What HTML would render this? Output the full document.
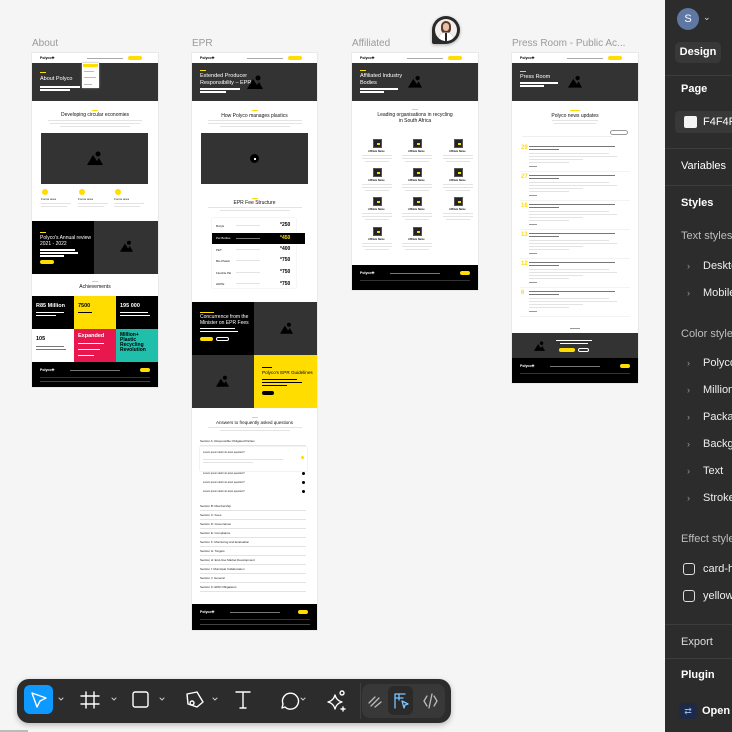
<!DOCTYPE html><html><head><meta charset="utf-8"><style>
*{margin:0;padding:0;box-sizing:border-box}
body{width:732px;height:732px;overflow:hidden;background:#f5f5f5;font-family:"Liberation Sans",sans-serif;position:relative}
.a{position:absolute}
.lbl{position:absolute;font-size:10px;color:#9a9a9a}
.fr{position:absolute;background:#fff;overflow:hidden;box-shadow:0 0 0 .5px #ddd}
.nav{position:absolute;left:0;top:0;width:100%;height:10px;background:#fff}
.logo{position:absolute;left:8px;top:3px;font-size:3.5px;font-weight:bold;color:#000}
.pill{position:absolute;border-radius:3px;background:#ffdd00}
.hero{position:absolute;left:0;top:10px;width:100%;height:38px;background:#333}
.wt{position:absolute;color:#fff;font-size:5.5px;line-height:6.5px;white-space:nowrap}
.bt{position:absolute;color:#111;font-size:5px;line-height:6px;text-align:center;width:100%}
.g{position:absolute;height:1px;background:#e3e3e3}
.w{position:absolute;height:1.6px;background:#fff}
.y{position:absolute;height:1px;width:6px;background:#ffdd00}
.dk{position:absolute;background:#333}
.bk{position:absolute;background:#000}
.ft{position:absolute;left:0;width:100%;background:#000}
.s{position:absolute;font-size:3px;color:#222;white-space:nowrap}
.rp{position:absolute;left:665px;top:0;width:67px;height:732px;background:#2c2c2c;color:#fff;font-size:11px}
.rp div{position:absolute;white-space:nowrap}
.hd{left:16px;font-weight:bold}
.sub{left:16px;color:#bdbdbd}
.it{left:38px;color:#eee}
.ch{left:22px;color:#999;font-size:9px}
.dv{left:0;width:67px;height:1px;background:#3d3d3d}
</style></head><body>

<div class="lbl" style="left:32px;top:38px">About</div>
<div class="lbl" style="left:192px;top:38px">EPR</div>
<div class="lbl" style="left:352px;top:38px">Affiliated</div>
<div class="lbl" style="left:512px;top:38px">Press Room - Public Ac...</div>

<!-- ABOUT -->
<div class="fr" style="left:32px;top:53px;width:126px;height:334px">
 <div class="nav"><div class="logo">Polyco✚</div><div class="g" style="left:55px;top:4.5px;width:36px;background:#aaa"></div><div class="pill" style="left:96px;top:3px;width:14px;height:4px"></div></div>
 <div class="hero"><div class="y" style="left:8px;top:9px"></div><div class="wt" style="left:8px;top:13px">About Polyco</div><div class="w" style="left:8px;top:23px;width:40px"></div><div class="w" style="left:8px;top:26px;width:30px"></div></div>
 <div class="a" style="left:50px;top:10px;width:17px;height:25px;background:#fff;box-shadow:0 0 2px #999"><div class="a" style="left:1px;top:1px;width:15px;height:3px;background:#ffdd00"></div><div class="g" style="left:2px;top:8px;width:10px;background:#bbb"></div><div class="g" style="left:2px;top:14px;width:12px;background:#bbb"></div><div class="g" style="left:2px;top:21px;width:8px;background:#bbb"></div></div>
 <div class="y" style="left:60px;top:57px"></div>
 <div class="bt" style="top:59px">Developing circular economies</div>
 <div class="g" style="left:16px;top:67px;width:94px"></div><div class="g" style="left:18px;top:70px;width:90px"></div><div class="g" style="left:28px;top:73px;width:70px"></div>
 <div class="dk" style="left:9px;top:80px;width:107px;height:51px"><svg class="a" style="left:46px;top:18px" width="16" height="14" viewBox="0 0 16 14"><path d="M0 14L6 4L10 10L12 7L16 14Z" fill="#000"/><circle cx="11" cy="3" r="2.5" fill="#000"/></svg></div>
 <div class="a" style="left:10px;top:136px;width:6px;height:6px;border-radius:3px;background:#ffdd00"></div>
 <div class="a" style="left:47px;top:136px;width:6px;height:6px;border-radius:3px;background:#ffdd00"></div>
 <div class="a" style="left:83px;top:136px;width:6px;height:6px;border-radius:3px;background:#ffdd00"></div>
 <div class="s" style="left:9px;top:144px">Focus area</div><div class="s" style="left:46px;top:144px">Focus area</div><div class="s" style="left:82px;top:144px">Focus area</div>
 <div class="g" style="left:9px;top:150px;width:30px"></div><div class="g" style="left:46px;top:150px;width:30px"></div><div class="g" style="left:82px;top:150px;width:30px"></div>
 <div class="g" style="left:9px;top:153px;width:26px"></div><div class="g" style="left:46px;top:153px;width:26px"></div><div class="g" style="left:82px;top:153px;width:26px"></div>
 <div class="bk" style="left:0;top:168px;width:62px;height:53px"><div class="y" style="left:8px;top:11px"></div><div class="wt" style="left:8px;top:14px;font-size:5px;line-height:6px">Polyco's Annual review<br>2021 - 2022</div><div class="w" style="left:8px;top:28px;width:35px"></div><div class="w" style="left:8px;top:31px;width:38px"></div><div class="w" style="left:8px;top:34px;width:24px"></div><div class="pill" style="left:8px;top:39px;width:14px;height:4px"></div></div>
 <div class="dk" style="left:62px;top:168px;width:64px;height:53px"><svg class="a" style="left:26px;top:19px" width="13" height="12" viewBox="0 0 16 14"><path d="M0 14L6 4L10 10L12 7L16 14Z" fill="#000"/><circle cx="11" cy="3" r="2.5" fill="#000"/></svg></div>
 <div class="y" style="left:60px;top:228px"></div>
 <div class="bt" style="top:231px">Achievements</div>
 <div class="bk" style="left:0;top:243px;width:42px;height:33px"><div class="wt" style="left:4px;top:7px;font-weight:bold;font-size:5.5px">R85 Million</div><div class="w" style="left:4px;top:16px;width:28px;height:1px"></div><div class="w" style="left:4px;top:19px;width:20px;height:1px"></div></div>
 <div class="a" style="left:42px;top:243px;width:42px;height:33px;background:#ffdd00"><div class="wt" style="left:4px;top:7px;font-weight:bold;color:#000">7500</div><div class="g" style="left:4px;top:16px;width:14px;background:#000"></div></div>
 <div class="bk" style="left:84px;top:243px;width:42px;height:33px"><div class="wt" style="left:4px;top:7px;font-weight:bold">195 000</div><div class="w" style="left:4px;top:16px;width:28px;height:1px"></div><div class="w" style="left:4px;top:19px;width:30px;height:1px"></div></div>
 <div class="a" style="left:0;top:276px;width:42px;height:33px;background:#fff"><div class="wt" style="left:4px;top:7px;font-weight:bold;color:#000">105</div><div class="g" style="left:4px;top:17px;width:28px;background:#777"></div><div class="g" style="left:4px;top:20px;width:30px;background:#777"></div></div>
 <div class="a" style="left:42px;top:276px;width:42px;height:33px;background:#e8184f"><div class="wt" style="left:4px;top:4px;font-weight:bold">Expanded</div><div class="w" style="left:4px;top:14px;width:26px;height:1px"></div><div class="w" style="left:4px;top:20px;width:22px;height:1px"></div><div class="w" style="left:4px;top:26px;width:16px;height:1px"></div></div>
 <div class="a" style="left:84px;top:276px;width:42px;height:33px;background:#1fbfab"><div class="wt" style="left:4px;top:4px;font-weight:bold;color:#000;font-size:5px;line-height:5px">Million+<br>Plastic<br>Recycling<br>Revolution</div></div>
 <div class="ft" style="top:309px;height:25px"><div class="logo" style="color:#fff;top:6px">Polyco✚</div><div class="g" style="left:38px;top:8px;width:50px;background:#777"></div><div class="pill" style="left:108px;top:6px;width:10px;height:4px"></div><div class="g" style="left:8px;top:15px;width:110px;background:#333"></div><div class="g" style="left:8px;top:19px;width:110px;background:#444;height:.5px"></div></div>
</div>

<!-- EPR -->
<div class="fr" style="left:192px;top:53px;width:125px;height:577px">
 <div class="nav"><div class="logo">Polyco✚</div><div class="g" style="left:55px;top:4.5px;width:36px;background:#aaa"></div><div class="pill" style="left:96px;top:3px;width:14px;height:4px"></div></div>
 <div class="hero"><div class="y" style="left:8px;top:7px"></div><div class="wt" style="left:8px;top:10px">Extended Producer<br>Responsibility – EPR</div><div class="w" style="left:8px;top:25px;width:40px"></div><div class="w" style="left:8px;top:28px;width:26px"></div><svg class="a" style="left:55px;top:12px" width="16" height="14" viewBox="0 0 16 14"><path d="M0 14L6 4L10 10L12 7L16 14Z" fill="#000"/><circle cx="11" cy="3" r="2.5" fill="#000"/></svg></div>
 <div class="y" style="left:60px;top:57px"></div>
 <div class="bt" style="top:60px">How Polyco manages plastics</div>
 <div class="g" style="left:16px;top:67px;width:94px"></div><div class="g" style="left:16px;top:70px;width:94px"></div><div class="g" style="left:28px;top:73px;width:70px"></div>
 <div class="dk" style="left:9px;top:80px;width:107px;height:51px"><div class="a" style="left:49px;top:21px;width:9px;height:9px;border-radius:5px;background:#000"></div><div class="a" style="left:52.5px;top:24.5px;width:2px;height:2px;background:#fff"></div></div>
 <div class="y" style="left:60px;top:145px"></div>
 <div class="bt" style="top:147px">EPR Fee Structure</div>
 <div class="g" style="left:16px;top:154px;width:94px"></div><div class="g" style="left:28px;top:157px;width:70px"></div>
 <div class="a" style="left:20px;top:165px;width:84px;height:70px;box-shadow:0 0 1px #ccc"></div>
 <div class="s" style="left:24px;top:171px">Butyls</div><div class="g" style="left:44px;top:172px;width:24px"></div><div class="a" style="left:88px;top:169px;font-size:5px;font-weight:bold">*250</div>
 <div class="bk" style="left:20px;top:180px;width:93px;height:11px"><div class="s" style="left:4px;top:3px;color:#fff">Pet Bottles</div><div class="g" style="left:24px;top:5px;width:24px;background:#777"></div><div class="a" style="left:68px;top:2px;font-size:5px;font-weight:bold;color:#ffdd00">*450</div></div>
 <div class="s" style="left:24px;top:195px">PET</div><div class="g" style="left:44px;top:196px;width:24px"></div><div class="a" style="left:88px;top:193px;font-size:5px;font-weight:bold">*400</div>
 <div class="s" style="left:24px;top:206px">Bio-Plastic</div><div class="g" style="left:44px;top:207px;width:24px"></div><div class="a" style="left:88px;top:204px;font-size:5px;font-weight:bold">*750</div>
 <div class="s" style="left:24px;top:218px">Flexible PE</div><div class="g" style="left:44px;top:219px;width:24px"></div><div class="a" style="left:88px;top:216px;font-size:5px;font-weight:bold">*750</div>
 <div class="s" style="left:24px;top:229px">HDPE</div><div class="g" style="left:44px;top:230px;width:24px"></div><div class="a" style="left:88px;top:228px;font-size:5px;font-weight:bold">*750</div>
 <div class="bk" style="left:0;top:249px;width:62px;height:53px"><div class="y" style="left:8px;top:10px;width:14px"></div><div class="wt" style="left:8px;top:13px;font-size:5px;line-height:5.5px">Concurrence from the<br>Minister on EPR Fees</div><div class="w" style="left:8px;top:26px;width:35px;height:1px"></div><div class="w" style="left:8px;top:29px;width:38px;height:1px"></div><div class="pill" style="left:8px;top:35px;width:13px;height:4px"></div><div class="a" style="left:24px;top:35px;width:13px;height:4px;border:.6px solid #fff;border-radius:3px"></div></div>
 <div class="dk" style="left:62px;top:249px;width:63px;height:53px"><svg class="a" style="left:26px;top:20px" width="13" height="12" viewBox="0 0 16 14"><path d="M0 14L6 4L10 10L12 7L16 14Z" fill="#000"/><circle cx="11" cy="3" r="2.5" fill="#000"/></svg></div>
 <div class="dk" style="left:0;top:302px;width:62px;height:53px"><svg class="a" style="left:24px;top:20px" width="13" height="12" viewBox="0 0 16 14"><path d="M0 14L6 4L10 10L12 7L16 14Z" fill="#000"/><circle cx="11" cy="3" r="2.5" fill="#000"/></svg></div>
 <div class="a" style="left:62px;top:302px;width:63px;height:53px;background:#ffdd00"><div class="g" style="left:8px;top:12px;width:10px;background:#000"></div><div class="wt" style="left:8px;top:15px;color:#000;font-size:4.6px">Polyco's EPR Guidelines</div><div class="g" style="left:8px;top:24px;width:35px;background:#000"></div><div class="g" style="left:8px;top:27px;width:40px;background:#000"></div><div class="g" style="left:8px;top:30px;width:25px;background:#000"></div><div class="a" style="left:8px;top:36px;width:12px;height:4px;border-radius:3px;background:#000"></div></div>
 <div class="y" style="left:60px;top:364px"></div>
 <div class="bt" style="top:367px;font-size:4.5px">Answers to frequently asked questions</div>
 <div class="g" style="left:16px;top:374px;width:94px"></div><div class="g" style="left:28px;top:377px;width:70px"></div>
 <div class="s" style="left:8px;top:386px">Section A: Responsible Obligated Parties</div><div class="g" style="left:8px;top:392px;width:106px;background:#e6e6e6"></div>
 <div class="a" style="left:8px;top:394px;width:107px;height:24px;box-shadow:0 0 1px #bbb"><div class="s" style="left:3px;top:4px;font-size:2.5px">Lorem ipsum dolor sit amet question?</div><div class="g" style="left:3px;top:12px;width:80px"></div><div class="g" style="left:3px;top:15px;width:50px"></div><div class="a" style="left:101px;top:9px;width:3px;height:3px;border-radius:2px;background:#ffdd00"></div></div>
 <div class="s" style="left:11px;top:419px;font-size:2.5px">Lorem ipsum dolor sit amet question?</div><div class="a" style="left:110px;top:419px;width:3px;height:3px;border-radius:2px;background:#000"></div>
 <div class="s" style="left:11px;top:428px;font-size:2.5px">Lorem ipsum dolor sit amet question?</div><div class="a" style="left:110px;top:428px;width:3px;height:3px;border-radius:2px;background:#000"></div>
 <div class="s" style="left:11px;top:437px;font-size:2.5px">Lorem ipsum dolor sit amet question?</div><div class="a" style="left:110px;top:437px;width:3px;height:3px;border-radius:2px;background:#000"></div>
 <div class="s" style="left:8px;top:451px">Section B: Membership</div><div class="g" style="left:8px;top:457px;width:106px"></div>
 <div class="s" style="left:8px;top:460px">Section C: Fees</div><div class="g" style="left:8px;top:466px;width:106px"></div>
 <div class="s" style="left:8px;top:469px">Section D: Governance</div><div class="g" style="left:8px;top:475px;width:106px"></div>
 <div class="s" style="left:8px;top:478px">Section E: Compliance</div><div class="g" style="left:8px;top:484px;width:106px"></div>
 <div class="s" style="left:8px;top:487px">Section F: Monitoring And Evaluation</div><div class="g" style="left:8px;top:493px;width:106px"></div>
 <div class="s" style="left:8px;top:496px">Section G: Targets</div><div class="g" style="left:8px;top:502px;width:106px"></div>
 <div class="s" style="left:8px;top:505px">Section H: End-Use Market Development</div><div class="g" style="left:8px;top:511px;width:106px"></div>
 <div class="s" style="left:8px;top:514px">Section I: Municipal Collaboration</div><div class="g" style="left:8px;top:520px;width:106px"></div>
 <div class="s" style="left:8px;top:523px">Section J: General</div><div class="g" style="left:8px;top:529px;width:106px"></div>
 <div class="s" style="left:8px;top:532px">Section K: EPR Obligations</div><div class="g" style="left:8px;top:538px;width:106px"></div>
 <div class="ft" style="top:551px;height:26px"><div class="logo" style="color:#fff;top:6px">Polyco✚</div><div class="g" style="left:38px;top:8px;width:50px;background:#777"></div><div class="pill" style="left:106px;top:6px;width:10px;height:4px"></div><div class="g" style="left:8px;top:15px;width:110px;background:#333"></div><div class="g" style="left:8px;top:20px;width:110px;background:#444;height:.5px"></div></div>
</div>

<!-- AFFILIATED -->
<div class="fr" style="left:352px;top:53px;width:126px;height:237px">
 <div class="nav"><div class="logo">Polyco✚</div><div class="g" style="left:55px;top:4.5px;width:36px;background:#aaa"></div><div class="pill" style="left:96px;top:3px;width:14px;height:4px"></div></div>
 <div class="hero"><div class="y" style="left:8px;top:7px"></div><div class="wt" style="left:8px;top:10px">Affiliated Industry<br>Bodies</div><div class="w" style="left:8px;top:25px;width:38px"></div><div class="w" style="left:8px;top:28px;width:24px"></div><svg class="a" style="left:56px;top:12px" width="14" height="13" viewBox="0 0 16 14"><path d="M0 14L6 4L10 10L12 7L16 14Z" fill="#000"/><circle cx="11" cy="3" r="2.5" fill="#000"/></svg></div>
 <div class="y" style="left:60px;top:56px"></div>
 <div class="bt" style="top:59px">Leading organisations in recycling<br>in South Africa</div>
 <div id="aff"></div>
 <div class="ft" style="top:212px;height:25px"><div class="logo" style="color:#fff;top:6px">Polyco✚</div><div class="g" style="left:38px;top:8px;width:50px;background:#777"></div><div class="pill" style="left:108px;top:6px;width:10px;height:4px"></div><div class="g" style="left:8px;top:15px;width:110px;background:#333"></div></div>
</div>

<!-- PRESS -->
<div class="fr" style="left:512px;top:53px;width:126px;height:330px">
 <div class="nav"><div class="logo">Polyco✚</div><div class="g" style="left:55px;top:4.5px;width:36px;background:#aaa"></div><div class="pill" style="left:96px;top:3px;width:14px;height:4px"></div></div>
 <div class="hero"><div class="y" style="left:8px;top:8px"></div><div class="wt" style="left:8px;top:11px">Press Room</div><div class="w" style="left:8px;top:19px;width:38px"></div><div class="w" style="left:8px;top:22px;width:24px"></div><svg class="a" style="left:56px;top:12px" width="14" height="13" viewBox="0 0 16 14"><path d="M0 14L6 4L10 10L12 7L16 14Z" fill="#000"/><circle cx="11" cy="3" r="2.5" fill="#000"/></svg></div>
 <div class="y" style="left:58px;top:57px;width:10px"></div>
 <div class="bt" style="top:60px">Polyco news updates</div>
 <div class="g" style="left:40px;top:67px;width:46px"></div><div class="g" style="left:42px;top:70px;width:42px"></div>
 <div class="g" style="left:10px;top:83px;width:90px;background:#eee"></div>
 <div class="a" style="left:98px;top:77px;width:18px;height:5px;border:.5px solid #999;border-radius:3px"></div>
 <div id="press"></div>
 <div class="g" style="left:58px;top:275px;width:10px;background:#999"></div>
 <div class="dk" style="left:0;top:280px;width:126px;height:25px"><svg class="a" style="left:22px;top:8px" width="11" height="10" viewBox="0 0 16 14"><path d="M0 14L6 4L10 10L12 7L16 14Z" fill="#000"/><circle cx="11" cy="3" r="2.5" fill="#000"/></svg><div class="w" style="left:44px;top:7px;width:36px;height:1px"></div><div class="w" style="left:48px;top:10px;width:28px;height:1px"></div><div class="pill" style="left:47px;top:15px;width:16px;height:4px"></div><div class="a" style="left:66px;top:15px;width:11px;height:4px;border:.5px solid #fff;border-radius:3px"></div></div>
 <div class="ft" style="top:305px;height:25px"><div class="logo" style="color:#fff;top:6px">Polyco✚</div><div class="g" style="left:38px;top:8px;width:50px;background:#777"></div><div class="pill" style="left:108px;top:6px;width:10px;height:4px"></div><div class="g" style="left:8px;top:15px;width:110px;background:#333"></div></div>
</div>

<!-- avatar pin -->
<div class="a" style="left:432px;top:16px;width:28px;height:28px;background:#2a2a2a;border-radius:14px 14px 14px 2px;box-shadow:0 1px 3px rgba(0,0,0,.3)"><div class="a" style="left:3px;top:3px;width:22px;height:22px;border-radius:11px;background:#f2efec;overflow:hidden"><div class="a" style="left:6px;top:2px;width:10px;height:13px;border-radius:5px;background:#5a3b2a"></div><div class="a" style="left:8px;top:4px;width:6px;height:8px;border-radius:3px;background:#e8c0a8"></div><div class="a" style="left:4px;top:14px;width:14px;height:10px;border-radius:5px 5px 0 0;background:#fff;box-shadow:0 0 0 .5px #ccc"></div><div class="a" style="left:10px;top:14px;width:2px;height:8px;background:#222"></div></div></div>

<!-- toolbar -->
<div class="a" style="left:17px;top:679px;width:434px;height:44px;background:#2c2c2c;border-radius:12px;box-shadow:0 2px 6px rgba(0,0,0,.25)">
 <div class="a" style="left:7px;top:6px;width:29px;height:29px;background:#0d99ff;border-radius:6px"></div>
 <svg class="a" style="left:0;top:0" width="434" height="44" fill="none" stroke="#fff" stroke-width="1.4" stroke-linejoin="round" stroke-linecap="round">
  <path d="M15 14L29 19L23 22L20 28Z"/>
  <path d="M42 19l2 2 2-2M95 19l2 2 2-2M143 19l2 2 2-2M196 19l2 2 2-2M284 19l2 2 2-2" stroke="#ccc" stroke-width="1"/>
  <path d="M69 13v16M77 13v16M64 17h18M64 25h18"/>
  <rect x="116" y="13" width="15" height="15" rx="2"/>
  <path d="M170 15l10 -2 6 10 -6 5 -9-3z M175 22a2 2 0 1 0 .1 0"/>
  <path d="M219 13h14M226 13v16M223 29h6"/>
  <path d="M268 28l-3 1 1-4a8 8 0 1 1 2 3z"/>
  <path d="M318 16c1 4 3 6 7 7-4 1-6 3-7 7-1-4-3-6-7-7 4-1 6-3 7-7z M325 12a2 2 0 1 0 .1 0 M326 28v4M324 30h4"/>
 </svg>
 <div class="a" style="left:343px;top:4px;width:1px;height:36px;background:#3e3e3e"></div>
 <div class="a" style="left:345px;top:5px;width:83px;height:34px;background:#383838;border-radius:8px"></div>
 <div class="a" style="left:371px;top:7px;width:25px;height:29px;background:#2a2a2a;border-radius:6px"></div>
 <svg class="a" style="left:0;top:0" width="434" height="44" fill="none" stroke-width="1.3" stroke-linecap="round" stroke-linejoin="round">
  <path d="M352 24l6-6M354 27l8-8M358 28l6-5" stroke="#bbb"/>
  <path d="M378 15h10M378 15v14M378 19h8M382 15v6M385 22l6 3-3 1-1 3z" stroke="#7cc4ff"/>
  <path d="M410 17l-3 5 3 5M417 17l3 5-3 5M415 15l-3 14" stroke="#bbb"/>
 </svg>
</div>
<div class="a" style="left:0;top:730px;width:28px;height:2px;background:#bbb"></div>

<!-- right panel -->
<div class="rp">
 <div style="left:12px;top:8px;width:22px;height:22px;border-radius:11px;background:#5f77a3;color:#fff;font-size:11px;text-align:center;line-height:22px">S</div>
 <div style="left:38px;top:12px;color:#ddd;font-size:9px">⌄</div>
 <div style="left:10px;top:42px;width:46px;height:21px;background:#383838;border-radius:5px;font-weight:bold;text-align:center;line-height:21px">Design</div>
 <div class="dv" style="top:75px"></div>
 <div class="hd" style="top:83px">Page</div>
 <div style="left:10px;top:111px;width:60px;height:22px;background:#383838;border-radius:4px"></div>
 <div style="left:19px;top:116px;width:13px;height:12px;background:#f4f4f4;border-radius:2px"></div>
 <div style="left:38px;top:116px">F4F4F</div>
 <div class="dv" style="top:148px"></div>
 <div style="left:16px;top:160px">Variables</div>
 <div class="dv" style="top:185px"></div>
 <div class="hd" style="top:197px">Styles</div>
 <div class="sub" style="top:230px">Text styles</div>
 <div class="ch" style="top:261px">›</div><div class="it" style="top:260px">Deskto</div>
 <div class="ch" style="top:288px">›</div><div class="it" style="top:287px">Mobile</div>
 <div class="sub" style="top:328px">Color style</div>
 <div class="ch" style="top:358px">›</div><div class="it" style="top:357px">Polyco</div>
 <div class="ch" style="top:385px">›</div><div class="it" style="top:384px">Million</div>
 <div class="ch" style="top:412px">›</div><div class="it" style="top:411px">Packa</div>
 <div class="ch" style="top:439px">›</div><div class="it" style="top:438px">Backg</div>
 <div class="ch" style="top:466px">›</div><div class="it" style="top:465px">Text</div>
 <div class="ch" style="top:493px">›</div><div class="it" style="top:492px">Stroke</div>
 <div class="sub" style="top:533px">Effect style</div>
 <div style="left:18px;top:563px;width:12px;height:12px;border:1.3px solid #ddd;border-radius:3px"></div><div class="it" style="top:563px">card-h</div>
 <div style="left:18px;top:590px;width:12px;height:12px;border:1.3px solid #ddd;border-radius:3px"></div><div class="it" style="top:590px">yellow</div>
 <div class="dv" style="top:624px"></div>
 <div style="left:16px;top:636px;color:#ddd">Export</div>
 <div class="dv" style="top:658px"></div>
 <div class="hd" style="top:669px">Plugin</div>
 <div style="left:14px;top:703px;width:18px;height:16px;background:#1e2a44;border-radius:4px;color:#8fb4ff;font-size:9px;text-align:center;line-height:16px">⇄</div>
 <div style="left:37px;top:705px;font-weight:bold">Open A</div>
</div>

<script>
var a=document.getElementById('aff'),h='';
var cols=[21,61,102],rows=[86,115,144,174];
for(var r=0;r<4;r++)for(var c=0;c<3;c++){if(r==3&&c==2)continue;var x=cols[c],y=rows[r];
h+='<div class="a" style="left:'+x+'px;top:'+y+'px;width:9px;height:9px;background:#222;border:1px solid #555"><div class="a" style="left:3px;top:3px;width:3px;height:2px;background:#ffdd00"></div></div>';
h+='<div class="s" style="left:'+(x-5)+'px;top:'+(y+11)+'px;font-size:2.5px;font-weight:bold">Affiliate Name</div>';
h+='<div class="g" style="left:'+(x-11)+'px;top:'+(y+16)+'px;width:30px"></div><div class="g" style="left:'+(x-11)+'px;top:'+(y+19)+'px;width:30px"></div><div class="g" style="left:'+(x-8)+'px;top:'+(y+22)+'px;width:24px"></div>';}
a.outerHTML=h;
var p=document.getElementById('press'),d=['29','27','16','13','12','6'];h='';
for(var i=0;i<6;i++){var y=92+i*29;
h+='<div class="a" style="left:9px;top:'+y+'px;font-size:6px;color:#ffdd00;font-weight:bold">'+d[i]+'</div>';
h+='<div class="g" style="left:17px;top:'+(y+1)+'px;width:86px;background:#777"></div><div class="g" style="left:17px;top:'+(y+4)+'px;width:30px;background:#777"></div>';
h+='<div class="g" style="left:17px;top:'+(y+8)+'px;width:80px"></div><div class="g" style="left:17px;top:'+(y+11)+'px;width:88px"></div><div class="g" style="left:17px;top:'+(y+14)+'px;width:54px"></div><div class="g" style="left:17px;top:'+(y+17)+'px;width:40px"></div>';
h+='<div class="g" style="left:17px;top:'+(y+21)+'px;width:8px;background:#999"></div><div class="g" style="left:8px;top:'+(y+26)+'px;width:110px;background:#f3f3f3"></div>';}
p.outerHTML=h;
</script>
</body></html>
